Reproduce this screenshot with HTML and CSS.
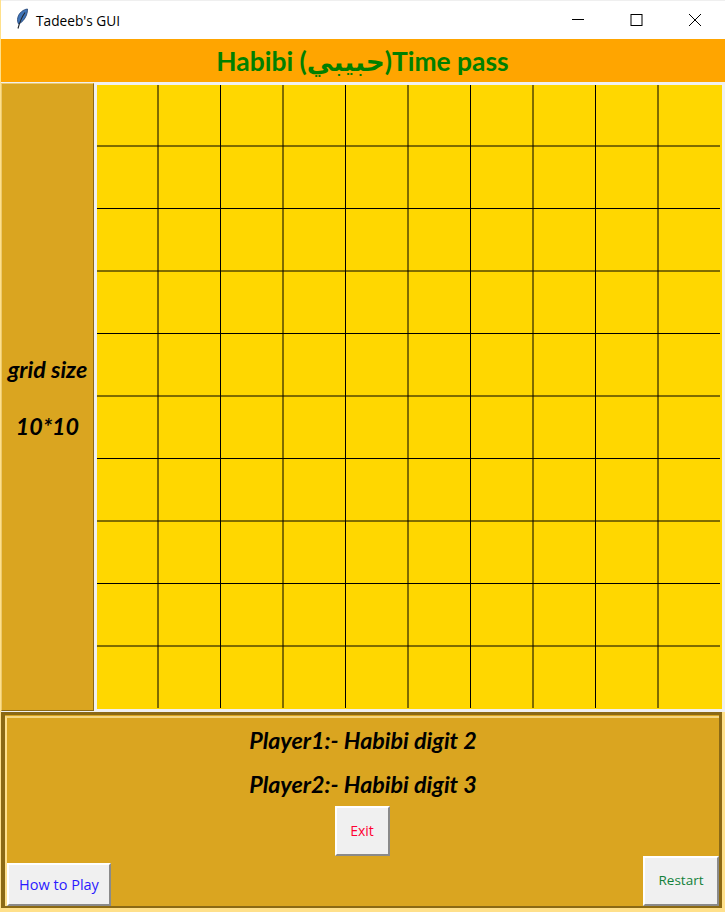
FILE: index.html
```html
<!DOCTYPE html>
<html lang="en">
<head>
    <meta charset="UTF-8">
    <meta name="viewport" content="width=device-width, initial-scale=1.0">
    <title>Tadeeb's GUI</title>
    <link rel="stylesheet" href="styles.css">
</head>
<body>
    <div class="window">
        <div class="titlebar">
            <svg class="feather" width="14" height="22" viewBox="0 0 14 22">
                <path d="M12.5 1 C8 1.5 4 5 2.8 9.5 C2.2 12 2.6 14.5 3.6 16 C7 14.5 10 11 11.5 7 C12.2 5 12.6 3 12.5 1 Z" fill="#3f74b8" stroke="#1f3f70" stroke-width="0.8"/>
                <path d="M10 4.5 C7.5 8 5 13 3 20.5" fill="none" stroke="#22272e" stroke-width="1.1"/>
            </svg>
            <span class="title-text">Tadeeb's GUI</span>
            <div class="title-controls">
                <svg class="ctrl" width="46" height="38" viewBox="0 0 46 38"><path d="M17 18.5 H29" stroke="#000" stroke-width="1" fill="none"/></svg>
                <svg class="ctrl" width="46" height="38" viewBox="0 0 46 38"><rect x="17" y="13.5" width="11" height="11" stroke="#000" stroke-width="1" fill="none"/></svg>
                <svg class="ctrl" width="46" height="38" viewBox="0 0 46 38"><path d="M17 13 L29 25 M29 13 L17 25" stroke="#000" stroke-width="1" fill="none"/></svg>
            </div>
        </div>

        <div class="header"><span>Habibi (حبيبي)Time pass</span></div>

        <div class="middle">
            <div class="side-panel">
                <p>grid size</p>
                <p>10*10</p>
            </div>
            <div class="canvas-wrap">
                <svg class="board" width="625" height="624" viewBox="0 0 625 624">
                    <g stroke="#000" stroke-width="1">
                        <path d="M61 0 V623 M123.5 0 V623 M186 0 V623 M248.5 0 V623 M311 0 V623 M373.5 0 V623 M436 0 V623 M498.5 0 V623 M561 0 V623"/>
                        <path d="M0 61 H623 M0 123.5 H623 M0 186 H623 M0 248.5 H623 M0 311 H623 M0 373.5 H623 M0 436 H623 M0 498.5 H623 M0 561 H623"/>
                    </g>
                </svg>
            </div>
        </div>

        <div class="bottom-frame">
            <div class="bottom-panel">
                <p class="player">Player1:- Habibi digit 2</p>
                <p class="player">Player2:- Habibi digit 3</p>
                <button class="btn btn-exit">Exit</button>
                <div class="btn-row">
                    <button class="btn btn-help">How to Play</button>
                    <button class="btn btn-restart">Restart</button>
                </div>
            </div>
        </div>
    </div>
</body>
</html>
```

FILE: styles.css
```css
html, body {
    margin: 0;
    padding: 0;
    background-color: #ffe08a;
}

body {
    width: 725px;
    height: 912px;
    overflow: hidden;
}

.window {
    display: flex;
    flex-direction: column;
    width: 725px;
    height: 912px;
    box-sizing: border-box;
    padding-left: 1px;
    background-color: #ffe08a;
}

.titlebar {
    display: flex;
    align-items: center;
    height: 39px;
    box-sizing: border-box;
    border-top: 1px solid #efefef;
    background-color: #ffffff;
    flex-shrink: 0;
}

.feather {
    margin-left: 14px;
    margin-top: -2px;
}

.title-text {
    margin-left: 7px;
    font-family: "Open Sans", sans-serif;
    font-size: 13.7px;
    color: #000000;
}

.title-controls {
    display: flex;
    margin-left: auto;
    margin-right: 7px;
}

.ctrl {
    display: block;
    margin-left: 12.5px;
}

.header {
    display: flex;
    justify-content: center;
    align-items: center;
    height: 43px;
    flex-shrink: 0;
    background-color: #ffa500;
    font-family: Lato, "DejaVu Sans", sans-serif;
    font-weight: bold;
    font-size: 26.4px;
    color: #008000;
}

.header span {
    margin-left: -1px;
}

.middle {
    display: flex;
    height: 630px;
    flex-shrink: 0;
    background-color: #f0f0f0;
}

.side-panel {
    display: flex;
    flex-direction: column;
    justify-content: center;
    align-items: center;
    gap: 33px;
    box-sizing: border-box;
    width: 93px;
    height: 628px;
    margin-top: 1px;
    background-color: #daa520;
    border: 1px solid;
    border-color: #ecc96f #8b6914 #8b6914 #ecc96f;
    font-family: Lato, sans-serif;
    font-weight: bold;
    font-style: italic;
    font-size: 23.3px;
    color: #000000;
}

.side-panel p {
    margin: 0;
    line-height: 24px;
    white-space: nowrap;
}

.canvas-wrap {
    margin-left: 3px;
    margin-top: 3px;
}

.board {
    display: block;
    background-color: #ffd700;
}

.bottom-frame {
    flex-shrink: 0;
    width: 721px;
    height: 196px;
    box-sizing: border-box;
    padding-top: 1px;
    background-color: #daa520;
    border: solid #8b6914;
    border-width: 3px 3px 2px 4px;
}

.bottom-panel {
    display: flex;
    flex-direction: column;
    align-items: center;
    box-sizing: border-box;
    height: 100%;
    padding-top: 9px;
    background-color: #daa520;
    border-top: 2px solid #f5d67f;
    border-left: 2px solid #ffe08a;
}

.player {
    margin: 0 0 18px;
    font-family: Lato, sans-serif;
    font-weight: bold;
    font-style: italic;
    font-size: 23.3px;
    line-height: 26px;
    color: #000000;
}

.player + .player {
    margin-bottom: 9px;
}

.btn {
    box-sizing: border-box;
    background-color: #f0f0f0;
    border: 2px solid;
    border-color: #ffffff #8a8a8a #8a8a8a #ffffff;
    padding: 0;
    font-family: "Open Sans", sans-serif;
    font-size: 13.5px;
}

.btn-exit {
    flex-shrink: 0;
    width: 55px;
    height: 50px;
    margin-left: -2px;
    padding-bottom: 2px;
    font-size: 14px;
    color: #ff0033;
}

.btn-row {
    display: flex;
    justify-content: space-between;
    align-items: flex-end;
    width: 100%;
    box-sizing: border-box;
}

.btn-help {
    width: 104px;
    height: 43px;
    padding-bottom: 1px;
    font-size: 14.5px;
    color: #2a1aff;
}

.btn-restart {
    width: 76px;
    height: 50px;
    padding-bottom: 2px;
    color: #12803a;
}
```
